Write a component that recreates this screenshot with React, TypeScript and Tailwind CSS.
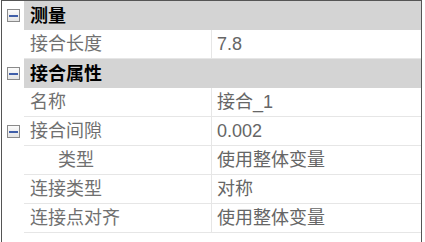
import React from "react";

const font = { fontFamily: '"Liberation Sans", "Noto Sans CJK SC", sans-serif' };

function Minus() {
  return (
    <div className="w-[13px] h-[13px] border border-[#8a8a8a] bg-gradient-to-b from-[#fbfbfb] to-[#e4e4e4] flex items-center justify-center">
      <div className="w-[9px] h-[2px] bg-[#3f5ea8]" />
    </div>
  );
}

function Header({ label }: { label: string }) {
  return (
    <div className="flex h-[29px]">
      <div className="w-[22px] flex items-center justify-center pl-[1px]">
        <Minus />
      </div>
      <div className="flex-1 bg-[#d4d4d4] flex items-center pl-[6px] text-[18px] font-bold text-black leading-none">
        {label}
      </div>
    </div>
  );
}

function Row({
  label,
  value,
  indent,
  minus,
}: {
  label: string;
  value: string;
  indent?: boolean;
  minus?: boolean;
}) {
  return (
    <div className="flex h-[29px]">
      <div className="w-[22px] flex items-center justify-center pl-[1px]">
        {minus ? <Minus /> : null}
      </div>
      <div className="flex-1 flex border-b border-[#e6e6e6]">
        <div
          className={
            "w-[188px] border-r border-[#e6e6e6] flex items-center text-[18px] text-[#707070] leading-none " +
            (indent ? "pl-[34px]" : "pl-[6px]")
          }
        >
          {label}
        </div>
        <div className="flex-1 flex items-center pl-[5px] text-[18px] text-[#666666] leading-none">
          {value}
        </div>
      </div>
    </div>
  );
}

export default function App() {
  return (
    <div className="w-[425px] h-[242px] bg-white overflow-hidden" style={font}>
      <div className="ml-[1px] w-[421px] h-[242px] border-l border-r border-t border-[#555555] flex flex-col">
        <Header label="测量" />
        <Row label="接合长度" value="7.8" />
        <Header label="接合属性" />
        <Row label="名称" value="接合_1" />
        <Row label="接合间隙" value="0.002" minus />
        <Row label="类型" value="使用整体变量" indent />
        <Row label="连接类型" value="对称" />
        <Row label="连接点对齐" value="使用整体变量" />
      </div>
    </div>
  );
}
